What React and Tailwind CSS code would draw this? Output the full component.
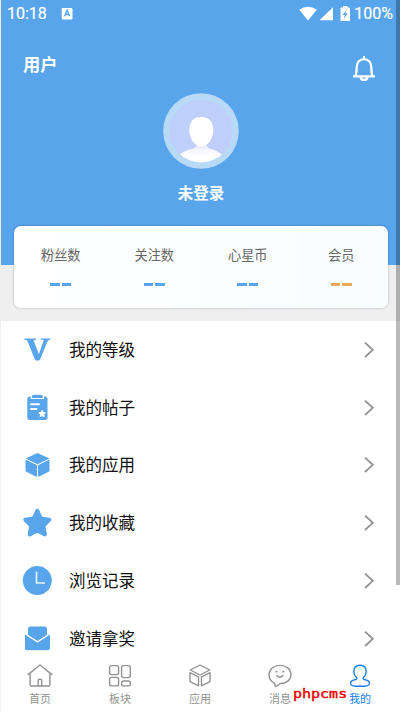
import React from "react";

const stats = [
  { label: "粉丝数", bar: "bg-[#58a5ec]" },
  { label: "关注数", bar: "bg-[#58a5ec]" },
  { label: "心星币", bar: "bg-[#58a5ec]" },
  { label: "会员", bar: "bg-[#eba85b]" },
];

const VIcon = () => (
  <svg width="32" height="32" viewBox="0 0 32 32" fill="#58a5ec">
    <path d="M3.500 4.500H15v1.200l-2.500.6 5.400 13.900 4.700-13.600q.1-.7-.8-.8l-2-.1V4.500h9.700v1.200l-1.800.3q-.8.200-1.200 1.300L19.200 25.200q-.6 1.300-1.700 1.300h-2q-1.200 0-1.700-1.300L6.400 7q-.4-.8-1.200-1l-1.700-.3z" />
  </svg>
);

const ClipboardIcon = () => (
  <svg width="32" height="32" viewBox="0 0 32 32">
    <path d="M9 4.500H24q2.500 0 2.500 2.500V25.500q0 2.500-2.500 2.500H8.800Q6.300 28 6.300 25.500V7q0-2.500 2.700-2.500Z" fill="#58a5ec" />
    <path d="M10.300 6.500V4.400q0-2.200 2.200-2.200h7.600q2.200 0 2.200 2.200v2.100z" fill="#58a5ec" stroke="white" strokeWidth="1.200" />
    <path d="M10 12.200h8M10 17h5.500" stroke="white" strokeWidth="1.900" strokeLinecap="round" />
    <path d="m21.200 18.300 1 2.100 2.300.4-1.700 1.600.4 2.300-2-1.100-2.100 1.100.4-2.300-1.600-1.600 2.300-.4z" fill="white" stroke="white" strokeLinejoin="round" />
  </svg>
);

const CubeIcon = () => (
  <svg width="32" height="32" viewBox="0 0 32 32" fill="#58a5ec" stroke="#58a5ec" strokeWidth="1" strokeLinejoin="round">
    <path d="m16.500 4.600 11 4.900-11 5.300-11-5.300z" />
    <path d="M5 11.300 15.500 16.500v10.800L5 22.100z" />
    <path d="M28 11.300 17.500 16.500v10.800L28 22.100z" />
  </svg>
);

const StarIcon = () => (
  <svg width="32" height="32" viewBox="0 0 32 32" fill="#58a5ec" stroke="#58a5ec" strokeWidth="4" strokeLinejoin="round">
    <path d="m16.300 3.800 3.600 7.800 8.500 1.100-6 6.100 1.500 8.600-7.600-3.900-7.600 3.900 1.500-8.600-6-6.100 8.500-1.100z" />
  </svg>
);

const ClockIcon = () => (
  <svg width="32" height="32" viewBox="0 0 32 32">
    <circle cx="16.300" cy="15.500" r="14.500" fill="#58a5ec" />
    <path d="M15.500 6.800v11.200h8.500" fill="none" stroke="#e5f3ff" strokeWidth="1.700" />
  </svg>
);

const MailIcon = () => (
  <svg width="32" height="32" viewBox="0 0 32 32" fill="#58a5ec">
    <path d="M7 12.500V6q0-2.500 2.500-2.500h14Q26 3.500 26 6v6.500l-9.500 6z" />
    <path
      d="M3.300 13q0-2.800 2.300-1.300l10.900 7.200 10.900-7.200q2.300-1.500 2.300 1.300V25q0 2.800-2.800 2.800H6.100Q3.300 27.800 3.300 25z"
      stroke="white"
      strokeWidth="1.300"
    />
  </svg>
);

const items = [
  { label: "我的等级", Icon: VIcon },
  { label: "我的帖子", Icon: ClipboardIcon },
  { label: "我的应用", Icon: CubeIcon },
  { label: "我的收藏", Icon: StarIcon },
  { label: "浏览记录", Icon: ClockIcon },
  { label: "邀请拿奖", Icon: MailIcon },
];

const HomeIcon = () => <path d="M2 11.600 14 2l12 9.600M4.100 10.200v11.600q0 1.200 1.200 1.200h17.400q1.200 0 1.200-1.200V10.200M12.200 23v-5.500q0-1.300 1.200-1.300h1q1.300 0 1.300 1.300V23" />;
const GridIcon = () => (
  <>
    <rect x="3.600" y="2.600" width="9" height="9" rx="2" />
    <rect x="15.600" y="2.600" width="8.700" height="12" rx="2" />
    <rect x="3.600" y="14.400" width="9" height="8.500" rx="2" />
    <rect x="15.600" y="18" width="8.700" height="4.900" rx="2" />
  </>
);
const BoxIcon = () => <path d="m14 2 9.700 5L14 12 4.300 7zM4 9.600l8.500 4.300v9L4 18.600zM24 9.600l-8.500 4.300v9l8.500-4.300z" />;
const ChatIcon = () => (
  <>
    <path d="M8.500 20.300Q3 17.600 3 11.800C3 6 8 2.400 14 2.400S25 6 25 11.600 20 20.500 14.500 20.500l-4.300 3q-.8.300-.8-.6z" />
    <path d="M10.700 12.600q3.100 3.300 6.300 0" />
    <path d="M10.500 8.700h.2M17.300 8.700h.2" strokeWidth="1.800" />
  </>
);
const UserIcon = () => <path d="M14 2.200c-4 0-6.200 2.700-6.200 6.300 0 2.400 1 4.500 2.700 6 .9.900.3 1.700-.8 2-3.300.7-5.300 2-5.300 3.900 0 2 3 2.900 9.600 2.900s9.600-.9 9.600-2.900c0-1.900-2-3.200-5.300-3.900-1.100-.3-1.700-1.100-.8-2 1.700-1.500 2.700-3.600 2.700-6 0-3.600-2.200-6.300-6.200-6.300z" />;

const tabs = [
  { label: "首页", Icon: HomeIcon },
  { label: "板块", Icon: GridIcon },
  { label: "应用", Icon: BoxIcon },
  { label: "消息", Icon: ChatIcon },
  { label: "我的", Icon: UserIcon, active: true },
];

function StatusBar() {
  return (
    <div className="flex h-7 items-center pr-[7px] pl-[6px] font-[Roboto,sans-serif] text-[16px]">
      <span className="w-[54px] [-webkit-text-stroke:0.2px_white]">10:18</span>
      <svg width="12" height="12" viewBox="0 0 12 12">
        <rect x=".7" width="10.800" height="11.500" rx="1.300" fill="white" />
        <path d="m3.500 8.200 2.600-6 2.600 6M4.400 6.500h3.400" fill="none" stroke="#58a5ec" strokeWidth="1.400" />
      </svg>
      <svg className="ml-auto" width="54" height="16" viewBox="0 0 54 16" fill="white">
        <path d="M1.300 3.800q8.500-6 17.500 0L10 14.500z" />
        <path d="M35 1.300v13H21.500z" />
        <path d="M45 0h4.500v1.500h2q.5 0 .5.500v12.500q0 .5-.5.500H43q-.5 0-.5-.5V2q0-.5.500-.5h2z" />
        <path d="M48.600 3.800 44.700 9h2.200l-1.100 4 4-5.500h-2.300z" fill="#58a5ec" />
      </svg>
      <span className="ml-[2px] [-webkit-text-stroke:0.2px_white]">100%</span>
    </div>
  );
}

function Avatar() {
  return (
    <svg width="76" height="76" viewBox="0 0 76 76">
      <defs>
        <linearGradient id="neck" x1="0" y1="0" x2="0" y2="1">
          <stop offset="0" stopColor="#e1e5fe" />
          <stop offset=".6" stopColor="#fff" />
        </linearGradient>
        <clipPath id="disc"><circle cx="38" cy="38" r="31.500" /></clipPath>
      </defs>
      <circle cx="38" cy="38" r="37.800" fill="#b8daf6" />
      <circle cx="38" cy="38" r="31.500" fill="#bfcffb" />
      <g clipPath="url(#disc)">
        <path d="M33.500 48h10v5q1 2 5 3 6 1.500 12 7v10H15V63q6-5.500 13-7 4.500-1 5.500-3z" fill="url(#neck)" />
        <path d="M26.300 37c0-8.500 4.600-13 12-13s12 4.500 12 13c0 9-5.500 16.300-12 16.300S26.300 46 26.300 37z" fill="white" />
      </g>
    </svg>
  );
}

export default function App() {
  return (
    <div className="relative flex h-[712px] w-[400px] flex-col overflow-hidden border-l border-[#efefef] bg-white font-['Noto_Sans_CJK_SC',sans-serif]">
      <header className="h-[265px] shrink-0 bg-[#58a5ec] text-white">
        <StatusBar />
        <div className="flex h-[65px] items-start justify-between pt-[24px] pr-[23px] pl-[22px]">
          <h1 className="text-[17.200px] leading-6 font-bold">用户</h1>
          <svg className="mt-[3px]" width="26" height="28" viewBox="0 0 26 28" fill="none" stroke="white" strokeWidth="2.300">
            <path d="M2 21.300h22M4.500 21c1.200-2.200 1-5 1.200-9 .2-4.700 3-7.800 7.300-7.800s7.100 3.100 7.300 7.800c.2 4 0 6.800 1.200 9" strokeLinejoin="round" />
            <path d="M12 2.200h2" />
            <path d="M9.500 22c.3 2 1.700 2.900 3.500 2.900s3.200-.9 3.500-2.900" />
          </svg>
        </div>
        <div className="flex flex-col items-center pl-px">
          <Avatar />
          <p className="mt-[11px] text-[15.500px] leading-6 font-bold">未登录</p>
        </div>
      </header>
      <section className="h-[56px] shrink-0 bg-[#efefef] pr-[12px] pl-[13px]">
        <div className="relative -mt-[39px] grid h-[82px] grid-cols-4 rounded-[7px] bg-linear-to-r from-white to-[#f8fdff] shadow-[0_0_2px_1px_rgba(0,0,0,0.12)]">
          {stats.map((s) => (
            <div key={s.label} className="flex flex-col items-center pt-[19px]">
              <span className="text-[13.200px] leading-5 text-[#666]">{s.label}</span>
              <span className="mt-[18px] flex gap-[2px]">
                <i className={`h-[3px] w-[9.500px] ${s.bar}`} />
                <i className={`h-[3px] w-[9.500px] ${s.bar}`} />
              </span>
            </div>
          ))}
        </div>
      </section>
      <main className="min-h-0 flex-1 overflow-hidden">
        {items.map(({ label, Icon }) => (
          <div key={label} className="flex h-[57.800px] items-center pr-[25px] pl-[20px]">
            <Icon />
            <span className="ml-[16px] flex-1 pb-[2px] text-[16.500px] leading-6 text-[#111]">{label}</span>
            <svg width="12" height="18" viewBox="0 0 12 18" fill="none" stroke="#929292" strokeWidth="1.800">
              <path d="m2 1.600 7.800 7.200L2 16" />
            </svg>
          </div>
        ))}
      </main>
      <nav className="-ml-px grid h-14 shrink-0 grid-cols-5 bg-white">
        {tabs.map(({ label, Icon, active }) => (
          <div key={label} className={`flex flex-col items-center pt-[7px] ${active ? "text-[#1682f6]" : "text-[#929292]"}`}>
            <svg width="28" height="26" viewBox="0 0 28 26" fill="none" stroke="currentColor" strokeWidth="1.400" strokeLinejoin="round" strokeLinecap="round">
              <Icon />
            </svg>
            <span className="mt-px text-[11px] leading-4">{label}</span>
          </div>
        ))}
      </nav>
      <span className="absolute top-[685px] left-[292px] origin-left scale-x-120 font-['DejaVu_Sans_Mono',monospace] text-[12.500px] leading-[18px] text-[#f00000] [-webkit-text-stroke:0.4px_#f00000]">phpcms</span>
      <div className="absolute top-0 right-0 h-[585px] w-1 bg-black/27" />
    </div>
  );
}
